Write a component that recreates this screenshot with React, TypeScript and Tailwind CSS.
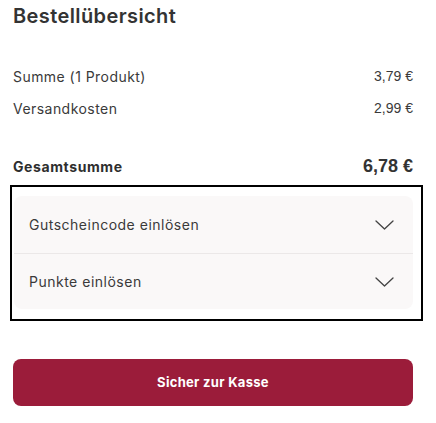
const sans = 'font-["Inter","Noto_Sans",sans-serif]';
const price = 'font-["Liberation_Sans",Arial,sans-serif]';

function Chevron() {
  return (
    <svg width="19" height="10" viewBox="0 0 19 10" fill="none" className="text-[#444]">
      <path d="M1 1l8.5 8L18 1" stroke="currentColor" strokeWidth="1.3" strokeLinecap="round" strokeLinejoin="round" />
    </svg>
  );
}

function SummaryRow({ label, value }: { label: string; value: string }) {
  return (
    <div className="flex h-8 items-center justify-between px-[13px]">
      <span className={`${sans} text-[14px] tracking-[0.45px] text-[#3a3a3a]`}>{label}</span>
      <span className={`${price} pr-[10px] text-[14px] text-[#3a3a3a]`}>{value}</span>
    </div>
  );
}

function RedeemRow({ label, className }: { label: string; className: string }) {
  return (
    <button className={`flex w-full items-center justify-between pl-[15px] pr-[19px] ${className}`}>
      <span className={`${sans} text-[14px] tracking-[0.5px] text-[#3a3a3a]`}>{label}</span>
      <Chevron />
    </button>
  );
}

export default function App() {
  return (
    <div className="w-[436px] h-[423px] bg-white">
      <h2 className={`${sans} flex h-8 items-center px-[13px] text-[20px] font-semibold tracking-[0.4px] text-[#333]`}>
        Bestellübersicht
      </h2>

      <div className="mt-7">
        <SummaryRow label="Summe (1 Produkt)" value="3,79 €" />
        <SummaryRow label="Versandkosten" value="2,99 €" />
      </div>

      <div className="mt-6 flex h-9 items-center justify-between px-[13px]">
        <span className={`${sans} text-[14px] font-bold tracking-[0.6px] text-[#2e2e2e]`}>Gesamtsumme</span>
        <span className={`${price} pr-[10px] text-[18px] font-bold text-[#333]`}>6,78 €</span>
      </div>

      <div className="ml-[10px] mt-px h-[136px] w-[413px] border-2 border-black pb-[9px] pl-[2px] pr-[8px] pt-[9px]">
        <div className="overflow-hidden rounded-lg bg-[#faf8f8]">
          <RedeemRow label="Gutscheincode einlösen" className="h-[58px] border-b border-[#ebe8e8]" />
          <RedeemRow label="Punkte einlösen" className="h-[55px]" />
        </div>
      </div>

      <div className="mt-[38px] px-[13px]">
        <button className={`${sans} h-[47px] w-[400px] rounded-lg bg-[#9b1c3a] text-[13px] font-bold tracking-[0.3px] text-white`}>
          Sicher zur Kasse
        </button>
      </div>
    </div>
  );
}
